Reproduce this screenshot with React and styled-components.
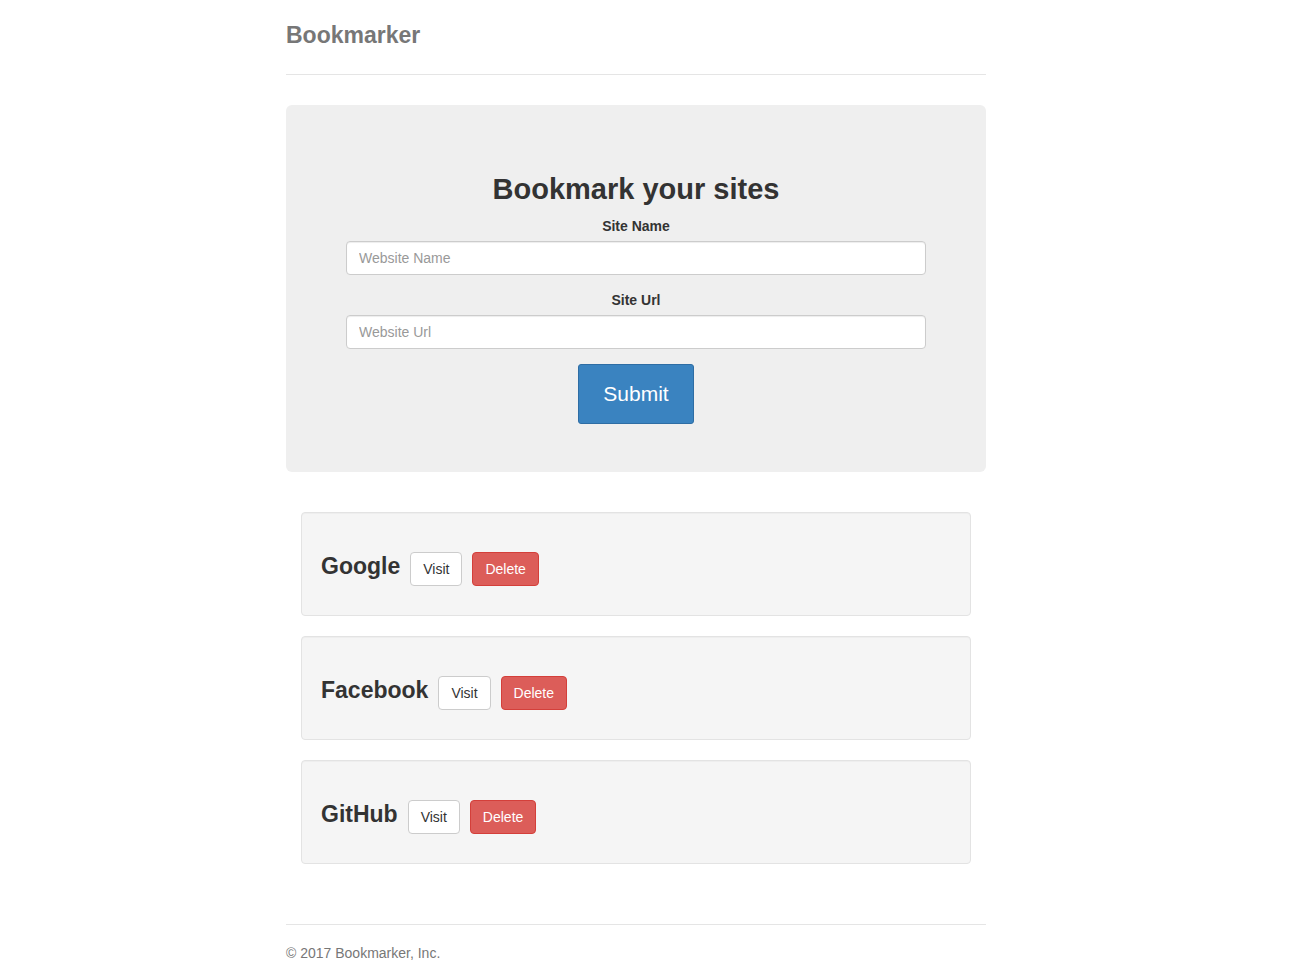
import styled, { createGlobalStyle } from "styled-components";

const GlobalStyle = createGlobalStyle`
  * { box-sizing: border-box; }
  body {
    margin: 0;
    background: #fff;
    color: #333;
    font-family: "Liberation Sans", Arial, Helvetica, sans-serif;
    font-size: 14px;
    line-height: 1.42857;
  }
`;

const bookmarks = [
  { name: "Google", url: "http://google.com" },
  { name: "Facebook", url: "http://facebook.com" },
  { name: "GitHub", url: "http://github.com" },
];

const App = () => {
  return (
    <Page>
      <GlobalStyle />
      <Container>
        <Header>
          <Brand>Bookmarker</Brand>
        </Header>

        <Jumbotron>
          <Title>Bookmark your sites</Title>
          <form onSubmit={(e) => e.preventDefault()}>
            <FormGroup>
              <Label>Site Name</Label>
              <Input type="text" placeholder="Website Name" />
            </FormGroup>
            <FormGroup>
              <Label>Site Url</Label>
              <Input type="text" placeholder="Website Url" />
            </FormGroup>
            <SubmitButton type="submit">Submit</SubmitButton>
          </form>
        </Jumbotron>

        <List>
          {bookmarks.map((b) => (
            <Well key={b.name}>
              <BookmarkRow>
                <span>{b.name}</span>
                <Button as="a" href={b.url}>Visit</Button>
                <Button $danger>Delete</Button>
              </BookmarkRow>
            </Well>
          ))}
        </List>

        <Footer>
          <p>© 2017 Bookmarker, Inc.</p>
        </Footer>
      </Container>
    </Page>
  );
};

const Page = styled.div`
  width: 1272px;
`;

const Container = styled.div`
  max-width: 730px;
  margin: 0 auto;
  padding: 15px 15px 0;
`;

const Header = styled.div`
  padding-bottom: 19px;
  border-bottom: 1px solid #e5e5e5;
  margin-bottom: 30px;
`;

const Brand = styled.h3`
  margin: 0;
  line-height: 40px;
  font-size: 23px;
  font-weight: bold;
  color: #777;
`;

const Jumbotron = styled.div`
  background: #efefef;
  border-radius: 6px;
  padding: 48px 60px;
  text-align: center;
  margin-bottom: 40px;
`;

const Title = styled.h2`
  margin: 20px 0 10px;
  font-size: 29px;
  font-weight: bold;
  line-height: 33px;
  color: #333;
`;

const FormGroup = styled.div`
  margin-bottom: 15px;
`;

const Label = styled.label`
  display: block;
  font-weight: bold;
  margin-bottom: 5px;
  line-height: 20px;
`;

const Input = styled.input`
  display: block;
  width: 100%;
  height: 34px;
  padding: 6px 12px;
  font-family: inherit;
  font-size: 14px;
  color: #555;
  background: #fff;
  border: 1px solid #ccc;
  border-radius: 4px;
  box-shadow: inset 0 1px 1px rgba(0, 0, 0, 0.075);
  outline: none;
  &::placeholder {
    color: #999;
  }
`;

const SubmitButton = styled.button`
  display: inline-block;
  padding: 15px 24px;
  font-family: inherit;
  font-size: 21px;
  line-height: 28px;
  color: #fff;
  background: #3a83c0;
  border: 1px solid #2e6da4;
  border-radius: 3px;
  cursor: pointer;
`;

const List = styled.div`
  padding: 0 15px;
`;

const Well = styled.div`
  min-height: 20px;
  padding: 19px;
  margin-bottom: 20px;
  background: #f5f5f5;
  border: 1px solid #e3e3e3;
  border-radius: 4px;
  box-shadow: inset 0 1px 1px rgba(0, 0, 0, 0.03);
`;

const BookmarkRow = styled.h3`
  display: flex;
  align-items: baseline;
  gap: 10px;
  margin: 20px 0 10px;
  font-size: 23px;
  font-weight: bold;
  color: #333;
  line-height: 1.1;
`;

const Button = styled.button`
  display: inline-block;
  padding: 6px 12px;
  font-family: inherit;
  font-size: 14px;
  font-weight: normal;
  line-height: 20px;
  text-decoration: none;
  border-radius: 4px;
  cursor: pointer;
  color: ${(p) => (p.$danger ? "#fff" : "#333")};
  background: ${(p) => (p.$danger ? "#dc5d59" : "#fff")};
  border: 1px solid ${(p) => (p.$danger ? "#d43f3a" : "#ccc")};
`;

const Footer = styled.footer`
  margin-top: 60px;
  padding-top: 19px;
  border-top: 1px solid #e5e5e5;
  color: #777;
  p {
    margin: 0 0 10px;
  }
`;

export default App;
